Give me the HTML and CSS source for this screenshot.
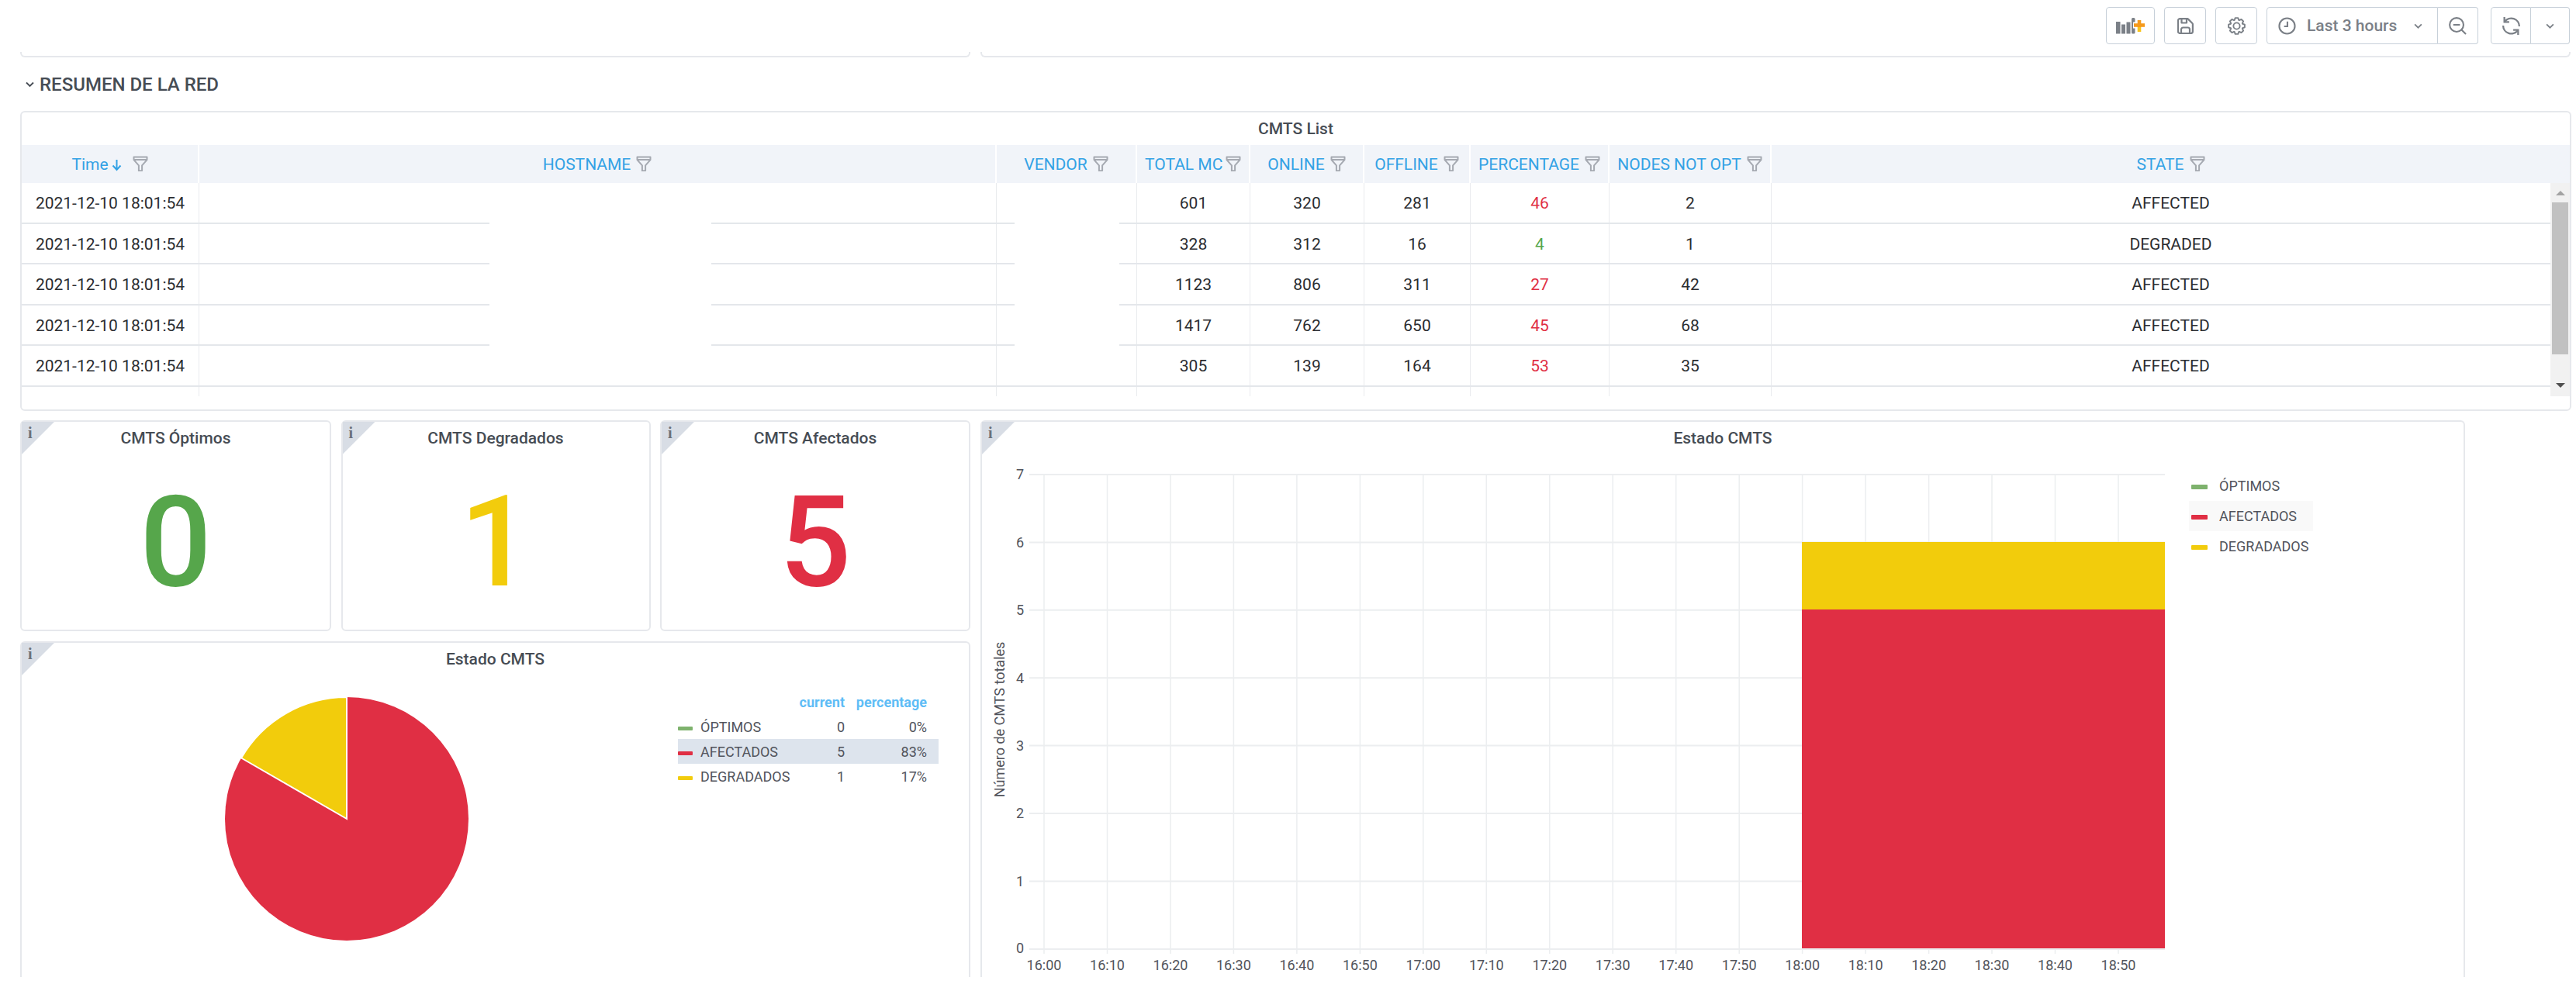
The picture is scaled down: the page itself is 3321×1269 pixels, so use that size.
FILE: index.html
```html
<!DOCTYPE html>
<html lang="es">
<head>
<meta charset="utf-8">
<title>RESUMEN DE LA RED</title>
<link rel="stylesheet" href="styles.css">
</head>
<body>
<svg class="defs" width="0" height="0" aria-hidden="true">
  <symbol id="filter" viewBox="0 0 20 20"><path d="M1.500 1.500h17v3.600l-6.400 7.200v6.600l-4.200 .6v-7.200L1.500 5.100zM1.500 5h17" fill="none" stroke="currentColor" stroke-width="2" stroke-linejoin="round"/></symbol>
</svg>

<header class="top">
  <div class="stubs">
    <div class="stub"></div>
    <div class="stub"></div>
  </div>
  <div class="toolbar">
    <button class="btn btn-add" type="button" aria-label="Add panel">
      <svg width="38" height="21" viewBox="0 0 38 21"><g fill="#7b8087"><rect x="0" y="5" width="5.500" height="15.500"/><rect x="7" y="8.500" width="5" height="12"/><rect x="13.500" y="5.500" width="5" height="15"/><rect x="20" y="0" width="4.500" height="20.500" rx="1.500"/></g><path d="M30.500 2v16M22 9.500h15" stroke="#fff" stroke-width="8"/><path d="M23 9.500h14" stroke="#f59a1d" stroke-width="4.600"/><path d="M30 3v9" stroke="#f59a1d" stroke-width="4.600"/><path d="M30 12v6" stroke="#f9c31a" stroke-width="4.600"/></svg>
    </button>
    <button class="btn btn-icon" type="button" aria-label="Save">
      <svg width="21" height="21" viewBox="0 0 21 21" fill="none" stroke="#7b8087" stroke-width="2.200" stroke-linejoin="round"><path d="M3.500 1.100h9.500a1.500 1.500 0 0 1 1 .5l5.400 5.400a1.500 1.500 0 0 1 .5 1V17.500a2.500 2.500 0 0 1-2.500 2.500H3.500A2.500 2.500 0 0 1 1 17.500V3.600a2.500 2.500 0 0 1 2.500-2.500z"/><path d="M5.500 1.100v5.400h6.500V1.100M5 20v-5a2.500 2.500 0 0 1 2.500-2.500h6a2.500 2.500 0 0 1 2.500 2.500v5"/></svg>
    </button>
    <button class="btn btn-icon" type="button" aria-label="Settings">
      <svg width="23" height="23" viewBox="0 0 24 24" fill="none" stroke="#7b8087" stroke-width="2" stroke-linejoin="round"><path d="M9.130 4.110L10.090 1.170H13.910L14.870 4.110L15.550 4.390L18.310 2.990L21.010 5.690L19.610 8.450L19.890 9.130L22.830 10.090V13.910L19.890 14.870L19.610 15.550L21.010 18.310L18.310 21.010L15.550 19.610L14.870 19.890L13.910 22.830H10.090L9.130 19.890L8.450 19.610L5.690 21.010L2.990 18.310L4.390 15.550L4.110 14.870L1.170 13.910V10.090L4.110 9.130L4.390 8.450L2.990 5.690L5.690 2.990L8.450 4.390z"/><circle cx="12" cy="12" r="4.300"/></svg>
    </button>
    <div class="group group-time">
      <button class="btn btn-range" type="button">
        <svg width="23" height="23" viewBox="0 0 24 24" fill="none" stroke="#7b8087" stroke-width="2.200"><circle cx="12" cy="12" r="10.500"/><path d="M12.500 6v6.500H8"/></svg>
        <span class="range-text">Last 3 hours</span>
        <svg class="chev" width="11" height="7" viewBox="0 0 12 8" fill="none" stroke="#7b8087" stroke-width="2"><path d="M1 1.500l5 5 5-5"/></svg>
      </button>
      <button class="btn btn-zoom" type="button" aria-label="Zoom out">
        <svg width="23" height="23" viewBox="0 0 24 24" fill="none" stroke="#7b8087" stroke-width="2.200"><circle cx="10.500" cy="10.500" r="9.300"/><path d="M6 10.500h9M17.200 17.200l5.800 5.800"/></svg>
      </button>
    </div>
    <div class="group group-refresh">
      <button class="btn btn-refresh" type="button" aria-label="Refresh">
        <svg width="25" height="25" viewBox="0 0 24 24" fill="none" stroke="#7b8087" stroke-width="2.200"><path d="M22 12.500A10 10 0 0 0 4 6.500M2 11.500a10 10 0 0 0 18 6"/><path d="M3.500 1v6h6M20.500 23v-6h-6"/></svg>
      </button>
      <button class="btn btn-more" type="button" aria-label="More">
        <svg width="11" height="7" viewBox="0 0 12 8" fill="none" stroke="#7b8087" stroke-width="2"><path d="M1 1.500l5 5 5-5"/></svg>
      </button>
    </div>
  </div>
</header>

<main class="main">
  <div class="row-head">
    <svg width="11" height="8" viewBox="0 0 11 8" fill="none" stroke="#464c54" stroke-width="1.800"><path d="M1 1.500l4.500 4.500 4.500-4.500"/></svg>
    <span>RESUMEN DE LA RED</span>
  </div>

  <section class="panel table-panel">
    <h2 class="panel-title">CMTS List</h2>
    <div class="t-row t-head">
      <div class="th"><span>Time</span><svg class="sort" width="13" height="18" viewBox="0 0 13 18" fill="none" stroke="currentColor" stroke-width="2"><path d="M6.500 3v13M1.500 10.500l5 5.500 5-5.500"/></svg><svg class="fi fi-time"><use href="#filter"/></svg></div>
      <div class="th"><span>HOSTNAME</span><svg class="fi"><use href="#filter"/></svg></div>
      <div class="th"><span>VENDOR</span><svg class="fi"><use href="#filter"/></svg></div>
      <div class="th"><span class="clip">TOTAL MC</span><svg class="fi"><use href="#filter"/></svg></div>
      <div class="th"><span>ONLINE</span><svg class="fi"><use href="#filter"/></svg></div>
      <div class="th"><span>OFFLINE</span><svg class="fi"><use href="#filter"/></svg></div>
      <div class="th"><span>PERCENTAGE</span><svg class="fi"><use href="#filter"/></svg></div>
      <div class="th"><span>NODES NOT OPT</span><svg class="fi"><use href="#filter"/></svg></div>
      <div class="th"><span>STATE</span><svg class="fi"><use href="#filter"/></svg></div>
    </div>
    <div class="t-body">
      <div class="t-row"><div class="td">2021-12-10 18:01:54</div><div class="td"></div><div class="td"></div><div class="td">601</div><div class="td">320</div><div class="td">281</div><div class="td red">46</div><div class="td">2</div><div class="td">AFFECTED</div></div>
      <div class="t-row"><div class="td">2021-12-10 18:01:54</div><div class="td"></div><div class="td"></div><div class="td">328</div><div class="td">312</div><div class="td">16</div><div class="td green">4</div><div class="td">1</div><div class="td">DEGRADED</div></div>
      <div class="t-row"><div class="td">2021-12-10 18:01:54</div><div class="td"></div><div class="td"></div><div class="td">1123</div><div class="td">806</div><div class="td">311</div><div class="td red">27</div><div class="td">42</div><div class="td">AFFECTED</div></div>
      <div class="t-row"><div class="td">2021-12-10 18:01:54</div><div class="td"></div><div class="td"></div><div class="td">1417</div><div class="td">762</div><div class="td">650</div><div class="td red">45</div><div class="td">68</div><div class="td">AFFECTED</div></div>
      <div class="t-row"><div class="td">2021-12-10 18:01:54</div><div class="td"></div><div class="td"></div><div class="td">305</div><div class="td">139</div><div class="td">164</div><div class="td red">53</div><div class="td">35</div><div class="td">AFFECTED</div></div>
      <div class="t-row"><div class="td"></div><div class="td"></div><div class="td"></div><div class="td"></div><div class="td"></div><div class="td"></div><div class="td"></div><div class="td"></div><div class="td"></div></div>
      <div class="mask mask-host"></div>
      <div class="mask mask-vendor"></div>
      <div class="scrollbar">
        <span class="arrow arrow-up"></span>
        <span class="thumb"></span>
        <span class="arrow arrow-down"></span>
      </div>
    </div>
  </section>

  <div class="dash">
    <div class="left">
      <div class="stats">
        <section class="panel stat">
          <span class="corner"><i>i</i></span>
          <h2 class="panel-title">CMTS Óptimos</h2>
          <div class="stat-value green-fill">0</div>
        </section>
        <section class="panel stat">
          <span class="corner"><i>i</i></span>
          <h2 class="panel-title">CMTS Degradados</h2>
          <div class="stat-value yellow-fill">1</div>
        </section>
        <section class="panel stat">
          <span class="corner"><i>i</i></span>
          <h2 class="panel-title">CMTS Afectados</h2>
          <div class="stat-value red-fill">5</div>
        </section>
      </div>
      <section class="panel pie-panel">
        <span class="corner"><i>i</i></span>
        <h2 class="panel-title">Estado CMTS</h2>
        <div class="pie-body">
          <svg class="pie" width="320" height="320" viewBox="0 0 320 320">
            <circle cx="160" cy="157" r="157" fill="#e02f44"/>
            <path d="M160 157L24 78.500A157 157 0 0 1 160 0z" fill="#f2cc0c" stroke="#fff" stroke-width="2"/>
          </svg>
          <div class="pie-legend">
            <div class="pl-row pl-head"><span></span><span></span><span>current</span><span>percentage</span></div>
            <div class="pl-row"><b class="sw sw-green"></b><span>ÓPTIMOS</span><span>0</span><span>0%</span></div>
            <div class="pl-row pl-hi"><b class="sw sw-red"></b><span>AFECTADOS</span><span>5</span><span>83%</span></div>
            <div class="pl-row"><b class="sw sw-yellow"></b><span>DEGRADADOS</span><span>1</span><span>17%</span></div>
          </div>
        </div>
      </section>
    </div>

    <section class="panel graph-panel">
      <span class="corner"><i>i</i></span>
      <h2 class="panel-title">Estado CMTS</h2>
      <div class="graph-body">
        <svg class="chart" width="1556" height="672" viewBox="1266 586 1556 672">
          <path d="M1327 612H2791M1327 699.400H2791M1327 786.800H2791M1327 874.200H2791M1327 961.600H2791M1327 1049H2791M1327 1136.400H2791M1327 1224H2791" stroke="#eceef0" stroke-width="2" fill="none"/>
          <path d="M1346 612V1230M1427.500 612V1230M1509 612V1230M1590.400 612V1230M1671.900 612V1230M1753.400 612V1230M1834.800 612V1230M1916.300 612V1230M1997.800 612V1230M2079.200 612V1230M2160.700 612V1230M2242.200 612V1230M2323.600 612V1230M2405.100 612V1230M2486.600 612V1230M2568 612V1230M2649.500 612V1230M2731 612V1230" stroke="#eceef0" stroke-width="1.500" fill="none"/>
          <rect x="2323" y="699" width="468" height="87" fill="#f2cc0c"/>
          <rect x="2323" y="786" width="468" height="437" fill="#e02f44"/>
          <g class="ticks-y">
            <text x="1320" y="618">7</text><text x="1320" y="705.500">6</text><text x="1320" y="793">5</text><text x="1320" y="880.500">4</text><text x="1320" y="968">3</text><text x="1320" y="1055">2</text><text x="1320" y="1142.500">1</text><text x="1320" y="1229">0</text>
          </g>
          <g class="ticks-x">
            <text x="1346" y="1251">16:00</text><text x="1427.500" y="1251">16:10</text><text x="1509" y="1251">16:20</text><text x="1590.400" y="1251">16:30</text><text x="1671.900" y="1251">16:40</text><text x="1753.400" y="1251">16:50</text><text x="1834.800" y="1251">17:00</text><text x="1916.300" y="1251">17:10</text><text x="1997.800" y="1251">17:20</text><text x="2079.200" y="1251">17:30</text><text x="2160.700" y="1251">17:40</text><text x="2242.200" y="1251">17:50</text><text x="2323.600" y="1251">18:00</text><text x="2405.100" y="1251">18:10</text><text x="2486.600" y="1251">18:20</text><text x="2568" y="1251">18:30</text><text x="2649.500" y="1251">18:40</text><text x="2731" y="1251">18:50</text>
          </g>
          <text class="y-label" transform="translate(1295 928) rotate(-90)">Número de CMTS totales</text>
        </svg>
        <ul class="g-legend">
          <li><b class="g-sw sw-green"></b>ÓPTIMOS</li>
          <li class="g-hi"><b class="g-sw sw-red"></b>AFECTADOS</li>
          <li><b class="g-sw sw-yellow"></b>DEGRADADOS</li>
        </ul>
      </div>
    </section>
  </div>
</main>
</body>
</html>
```

FILE: styles.css
```css
* { box-sizing: border-box; }
html, body { margin: 0; padding: 0; }
body {
  width: 3321px;
  height: 1269px;
  overflow: hidden;
  background: #fff;
  font-family: Roboto, "Liberation Sans", sans-serif;
  color: #464c54;
}
.defs { display: block; height: 0; }

/* top strip */
.top { display: grid; height: 74px; }
.stubs, .toolbar { grid-area: 1 / 1; }
.stubs {
  display: grid;
  grid-template-columns: 1225px 2050px;
  column-gap: 13px;
  padding-left: 26px;
  align-items: end;
}
.stub {
  height: 7px;
  border: solid #e6e8ec;
  border-width: 0 2px 2px 2px;
  border-radius: 0 0 6px 6px;
}
.toolbar {
  display: flex;
  justify-content: flex-end;
  align-items: flex-start;
  padding: 9px 8px 0 0;
  gap: 12px;
}
.btn {
  height: 48px;
  display: flex;
  align-items: center;
  justify-content: center;
  background: #fff;
  border: 1.500px solid #c7d0d9;
  border-radius: 4px;
  padding: 0;
  font: inherit;
}
.btn-add { width: 63px; }
.btn-icon { width: 54px; }
.group { display: flex; }
.group .btn:first-child { border-radius: 4px 0 0 4px; }
.group .btn:last-child { border-radius: 0 4px 4px 0; border-left: 0; }
.group-refresh { margin-left: 4px; }
.btn-range { width: 221px; justify-content: flex-start; padding-left: 14px; }
.range-text { margin-left: 14px; font-size: 21px; font-weight: 500; color: #7b8087; }
.chev { margin-left: 22px; }
.btn-zoom { width: 52px; }
.btn-refresh { width: 52px; }
.btn-more { width: 50px; }

/* main */
.main { padding: 0 6px 0 26px; }
.row-head {
  height: 69px;
  display: flex;
  align-items: center;
  gap: 7px;
  padding-left: 7px;
  font-size: 24px;
  font-weight: 500;
  color: #464c54;
}
.panel {
  position: relative;
  background: #fff;
  border: 2px solid #e6e8ec;
  border-radius: 6px;
}
.panel-title {
  margin: 0;
  height: 42px;
  display: flex;
  align-items: center;
  justify-content: center;
  font-size: 21px;
  font-weight: 500;
  color: #464c54;
}

/* table */
.table-panel { height: 387px; margin-bottom: 12px; }
.t-row {
  display: grid;
  grid-template-columns: 229px 1028px 181px 146px 147px 137px 179px 209px 1fr;
}
.t-head { height: 49px; background: #f1f4f9; }
.th {
  display: flex;
  align-items: center;
  justify-content: center;
  gap: 7px;
  font-size: 21px;
  color: #33a2e5;
  border-right: 2px solid #fff;
  min-width: 0;
  white-space: nowrap;
}
.th:last-child { border-right: 0; }
.clip { display: block; width: 97px; }
.fi { width: 20px; height: 20px; color: #a5a9b1; margin-top: -2px; flex: none; }
.fi-time { margin-left: 7px; }
.sort { margin-left: -3px; }
.t-body { position: relative; height: 275px; overflow: hidden; }
.t-body .t-row { height: 52.500px; border-bottom: 2px solid #e4e7eb; }
.td {
  display: flex;
  align-items: center;
  justify-content: center;
  padding-top: 2px;
  font-size: 21px;
  color: #2b2d31;
  border-right: 1px solid #e9ebee;
  white-space: nowrap;
}
.td:last-child { border-right: 0; }
.red { color: #e02f44; }
.green { color: #56a64b; }
.mask { position: absolute; top: 0; height: 260px; background: #fff; }
.mask-host { left: 603px; width: 286px; }
.mask-vendor { left: 1280px; width: 135px; }
.scrollbar {
  position: absolute;
  top: 0;
  right: 0;
  bottom: 0;
  width: 25px;
  display: flex;
  flex-direction: column;
  align-items: center;
  background: #f1f1f1;
}
.arrow { width: 0; height: 0; border-left: 6px solid transparent; border-right: 6px solid transparent; }
.arrow-up { border-bottom: 6px solid #a3a3a3; margin-top: 10px; margin-bottom: 9px; }
.arrow-down { border-top: 6px solid #505050; margin-top: auto; margin-bottom: 11px; }
.thumb { width: 21px; height: 196px; background: #c1c1c1; }

/* dashboard */
.dash {
  display: grid;
  grid-template-columns: 1225px 1914px;
  column-gap: 13px;
  height: 718px;
  overflow: hidden;
}
.left { display: flex; flex-direction: column; gap: 13px; }
.stats {
  display: grid;
  grid-template-columns: 401px 399px 400px;
  column-gap: 12.500px;
}
.stat { height: 272px; display: flex; flex-direction: column; }
.stat-value {
  flex: 1;
  display: flex;
  align-items: center;
  justify-content: center;
  font-size: 163px;
  font-weight: 500;
  line-height: 1;
}
.green-fill { color: #56a64b; }
.yellow-fill { color: #f2cc0c; }
.red-fill { color: #e02f44; }
.corner {
  position: absolute;
  top: 0;
  left: 0;
  width: 42px;
  height: 42px;
  background: #d8dde5;
  clip-path: polygon(0 0, 100% 0, 0 100%);
}
.corner i {
  position: absolute;
  left: 8px;
  top: 2px;
  font: bold 20px/24px "Liberation Serif", serif;
  color: #6b7079;
}

/* pie */
.pie-panel { flex: 1; min-height: 0; border-bottom: 0; border-radius: 6px 6px 0 0; }
.pie-body { display: flex; align-items: flex-start; padding-top: 18px; }
.pie { margin: 10px 0 0 259px; flex: none; }
.pie-legend { margin-left: 267px; width: 336px; font-size: 18px; color: #52545c; }
.pl-row {
  display: grid;
  grid-template-columns: 29px 112px 74px 106px;
  align-items: center;
  height: 32px;
  white-space: nowrap;
}
.pl-row span:nth-child(n+3) { text-align: right; }
.pl-head { font-weight: 700; color: #5fbdf6; }
.pl-hi { background: #dde4ed; }
.sw { display: block; width: 19px; height: 5px; margin-top: 4px; border-radius: 1px; }
.sw-green { background: #7eb26d; }
.sw-red { background: #e02f44; }
.sw-yellow { background: #f2cc0c; }

/* graph */
.graph-panel { border-bottom: 0; border-radius: 6px 6px 0 0; }
.graph-body { display: flex; align-items: flex-start; }
.chart { display: block; flex: none; }
.chart text { font-family: Roboto, "Liberation Sans", sans-serif; font-size: 18px; fill: #52545c; }
.ticks-y text { text-anchor: end; }
.ticks-x text { text-anchor: middle; }
.chart .y-label { text-anchor: middle; }
.g-legend {
  list-style: none;
  margin: 21px 0 0;
  padding: 0;
  width: 160px;
  font-size: 18px;
  color: #52545c;
}
.g-legend li { height: 39px; display: flex; align-items: center; padding-left: 3px; white-space: nowrap; }
.g-hi { background: #f9f9f9; }
.g-sw { display: block; width: 21px; height: 6px; margin: 3px 15px 0 0; border-radius: 1px; }
```
